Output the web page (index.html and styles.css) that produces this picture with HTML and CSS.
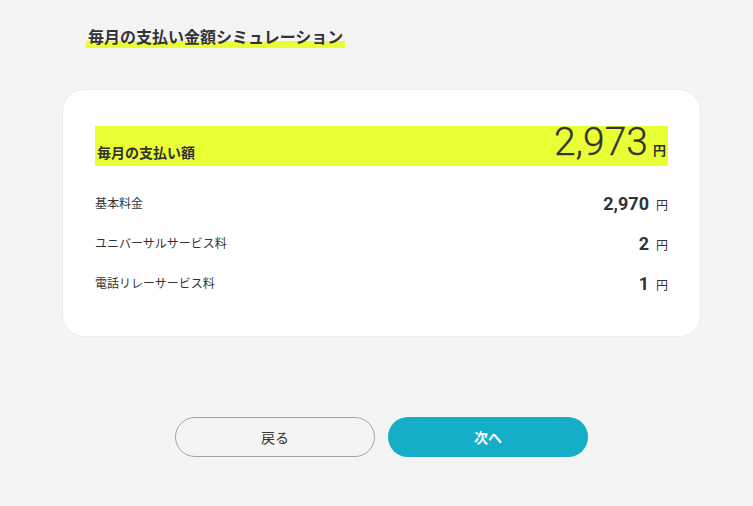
FILE: index.html
```html
<!DOCTYPE html>
<html lang="ja">
<head>
<meta charset="utf-8">
<link rel="stylesheet" href="styles.css">
</head>
<body>
<div class="page">
  <h1 class="title"><span class="title-text">毎月の支払い金額シミュレーション</span></h1>
  <div class="card">
    <div class="total">
      <span class="total-label">毎月の支払い額</span>
      <span class="total-value"><span class="total-num">2,973</span><span class="total-yen">円</span></span>
    </div>
    <div class="row">
      <span class="row-label">基本料金</span>
      <span class="row-value"><span class="row-num">2,970</span><span class="row-yen">円</span></span>
    </div>
    <div class="row">
      <span class="row-label">ユニバーサルサービス料</span>
      <span class="row-value"><span class="row-num">2</span><span class="row-yen">円</span></span>
    </div>
    <div class="row">
      <span class="row-label">電話リレーサービス料</span>
      <span class="row-value"><span class="row-num">1</span><span class="row-yen">円</span></span>
    </div>
  </div>
  <div class="actions">
    <button class="btn btn-back">戻る</button>
    <button class="btn btn-next">次へ</button>
  </div>
</div>
</body>
</html>
```

FILE: styles.css
```css
html, body {
  margin: 0;
  padding: 0;
  background: #f4f4f4;
}
body {
  font-family: "Noto Sans CJK JP", "Noto Sans", sans-serif;
  color: #333;
}
.page {
  width: 639px;
  margin-left: 62px;
  padding-top: 24px;
}
.title {
  margin: 0 0 0 24px;
  font-size: 16px;
  line-height: 24px;
  font-weight: 700;
}
.title-text {
  display: inline-block;
  padding: 0 2px;
  background: linear-gradient(to bottom, transparent 17px, #eaff33 17px);
}
.card {
  margin-top: 41px;
  background: #fff;
  border: 1px solid #ececec;
  border-radius: 22px;
  padding: 36px 32px 32px 32px;
}
.total {
  height: 40px;
  background: #eaff33;
  display: flex;
  justify-content: space-between;
  align-items: flex-end;
  padding: 0 2px 0 2px;
  box-sizing: border-box;
}
.total-label {
  font-size: 14px;
  font-weight: 700;
  line-height: 20px;
  margin-bottom: 4px;
}
.total-value {
  display: flex;
  align-items: baseline;
  line-height: 1;
}
.total-num {
  font-family: Roboto, "Liberation Sans", sans-serif;
  font-weight: 300;
  font-size: 39px;
  margin-bottom: 4px;
  -webkit-text-stroke: 0.3px #333;
}
.total-yen {
  font-size: 13px;
  font-weight: 700;
  margin-left: 5px;
}
.total + .row {
  margin-top: 18px;
}
.row {
  height: 40px;
  display: flex;
  justify-content: space-between;
  align-items: center;
}
.row-label {
  font-size: 12px;
  line-height: 16px;
  padding-bottom: 2px;
}
.row-value {
  display: flex;
  align-items: baseline;
  line-height: 1;
}
.row-num {
  font-family: Roboto, "Liberation Sans", sans-serif;
  font-weight: 700;
  font-size: 18px;
}
.row-yen {
  font-size: 12px;
  margin-left: 7px;
}
.actions {
  margin-top: 80px;
  display: flex;
  justify-content: center;
  gap: 13px;
}
.btn {
  width: 200px;
  height: 40px;
  border-radius: 20px;
  font-family: "Noto Sans CJK JP", "Noto Sans", sans-serif;
  font-size: 14px;
  cursor: pointer;
  box-sizing: border-box;
}
.btn-back {
  background: transparent;
  border: 1px solid #a3a3a3;
  color: #333;
}
.btn-next {
  background: #14aec8;
  border: none;
  color: #fff;
  font-weight: 700;
}
```
